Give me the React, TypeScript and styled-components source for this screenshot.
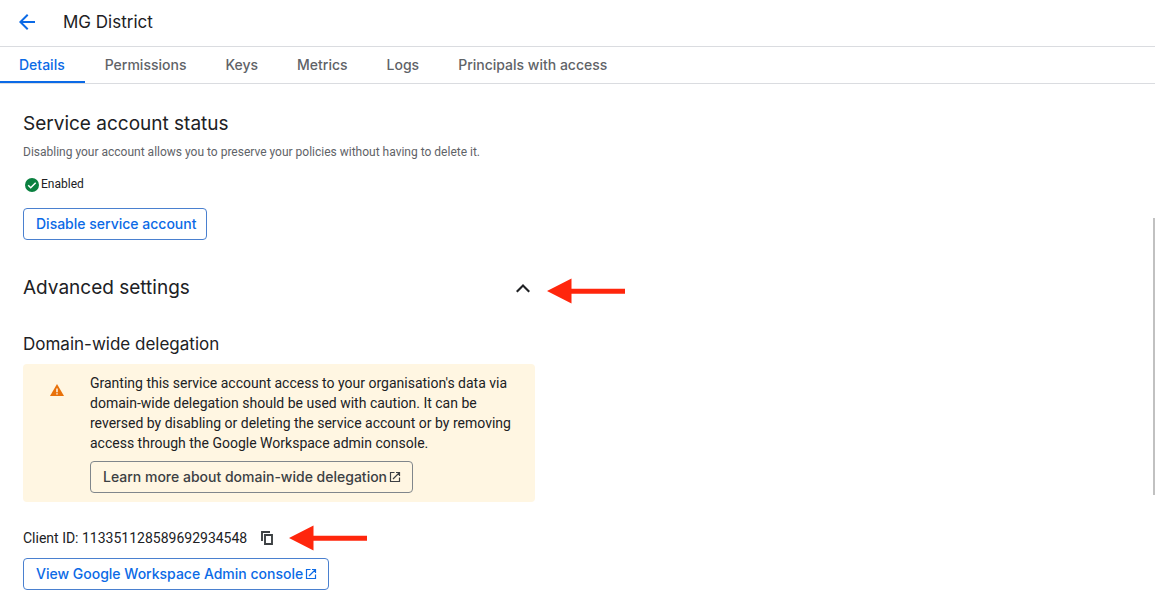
import React from "react";
import styled, { createGlobalStyle } from "styled-components";

const GlobalStyle = createGlobalStyle`
  * { box-sizing: border-box; }
  body {
    margin: 0;
    background: #fff;
    color: #202124;
    font-family: Roboto, "Liberation Sans", sans-serif;
    font-size: 14px;
    line-height: 20px;
  }
  h1, h2, h3, p { margin: 0; font-weight: 400; }
`;

const display = `Inter, Roboto, sans-serif`;

const Page = styled.div`
  position: relative;
  min-height: 100vh;
`;

const Header = styled.header`
  display: flex;
  align-items: center;
  gap: 24px;
  height: 47px;
  padding: 0 15px 2px;
  border-bottom: 1px solid #dadce0;
`;

const IconButton = styled.button<{ $size: number; $color: string }>`
  display: flex;
  align-items: center;
  justify-content: center;
  width: ${(p) => p.$size}px;
  height: ${(p) => p.$size}px;
  padding: 0;
  border: 0;
  background: none;
  color: ${(p) => p.$color};
  cursor: pointer;
`;

const Title = styled.h1`
  font-family: ${display};
  font-size: 17px;
  line-height: 24px;
`;

const Tabs = styled.nav`
  display: flex;
  gap: 1px;
  height: 37px;
  border-bottom: 1px solid #dadce0;
`;

const Tab = styled.a<{ $active?: boolean }>`
  padding: 8px 19px 0;
  border-bottom: 2px solid ${(p) => (p.$active ? "#0b6ae6" : "transparent")};
  color: ${(p) => (p.$active ? "#0b6ae6" : "#5f6368")};
  font-family: ${display};
  font-size: 14px;
  font-weight: 500;
  text-decoration: none;

  &:first-child {
    padding-right: 20px;
  }
`;

const Content = styled.main`
  padding: 26px 23px 16px;
`;

const Heading = styled.h2`
  font-family: ${display};
  font-size: 19px;
  line-height: 28px;
`;

const Subheading = styled.h3`
  font-family: ${display};
  font-size: 17px;
  line-height: 24px;
`;

const Hint = styled.p`
  margin-top: 6px;
  color: #5f6368;
  font-size: 12px;
  line-height: 16px;
`;

const Status = styled.p`
  display: flex;
  align-items: center;
  gap: 2px;
  margin: 16px 0;
  padding-left: 2px;
  font-size: 12px;
  line-height: 16px;
`;

const OutlineButton = styled.button<{ $neutral?: boolean }>`
  display: inline-flex;
  align-items: center;
  gap: 1px;
  height: 32px;
  padding: 0 10px 0 12px;
  border: 1px solid ${(p) => (p.$neutral ? "#80868b" : "#4a80cf")};
  border-radius: 4px;
  background: none;
  color: ${(p) => (p.$neutral ? "#3c4043" : "#0b6ae6")};
  font-family: ${display};
  font-size: 14px;
  font-weight: 500;
  line-height: 20px;
  white-space: nowrap;
  cursor: pointer;
`;

const AdvancedRow = styled.div`
  display: flex;
  align-items: center;
  gap: 12px;
  height: 28px;
  margin: 34px 0 30px;
`;

const AdvancedToggle = styled.div`
  display: flex;
  flex: 0 1 512px;
  align-items: center;
  justify-content: space-between;
`;

const Notice = styled.section`
  display: flex;
  gap: 25px;
  max-width: 512px;
  margin-top: 8px;
  padding: 9px 22px 9px 26px;
  border-radius: 4px;
  background: #fff6e2;
`;

const NoticeIcon = styled.svg`
  flex: none;
  margin-top: 9px;
`;

const NoticeBody = styled.div`
  display: flex;
  flex-direction: column;
  align-items: flex-start;
  gap: 8px;
`;

const ClientRow = styled.div`
  display: flex;
  align-items: center;
  gap: 13px;
  height: 28px;
  margin: 22px 0 6px;
`;

const Arrow = styled.svg`
  flex: none;
`;

const ScrollThumb = styled.div`
  position: absolute;
  top: 218px;
  right: 0;
  width: 2px;
  height: 277px;
  background: #c1c1c1;
`;

const PointerArrow = ({ drop = 0 }: { drop?: number }) => (
  <Arrow width="79" height="32" viewBox={`0 ${-3 - drop} 79 32`} aria-hidden="true">
    <path d="M0 13 24.500 .5v10.300H78v5H24.500v9.700z" fill="#ff260c" />
  </Arrow>
);

const LaunchIcon = () => (
  <svg width="14" height="14" viewBox="0 0 14 14" fill="none" stroke="currentColor" strokeWidth="1.200" aria-hidden="true">
    <path d="M6.500 2.500h-4v9h9v-4M8 2.500h3.500V6M11.500 2.500 5 9" />
  </svg>
);

const tabs = ["Details", "Permissions", "Keys", "Metrics", "Logs", "Principals with access"];

export default function App() {
  return (
    <>
      <GlobalStyle />
      <Page>
        <Header>
          <IconButton $size={24} $color="#0b6ae6" aria-label="Back">
            <svg width="24" height="24" viewBox="0 0 24 24" fill="currentColor" aria-hidden="true">
              <path d="M20 11H7.830l5.590-5.590L12 4l-8 8 8 8 1.410-1.410L7.830 13H20v-2z" />
            </svg>
          </IconButton>
          <Title>MG District</Title>
        </Header>
        <Tabs>
          {tabs.map((name, i) => (
            <Tab key={name} href="#" $active={i === 0}>
              {name}
            </Tab>
          ))}
        </Tabs>
        <Content>
          <Heading>Service account status</Heading>
          <Hint>Disabling your account allows you to preserve your policies without having to delete it.</Hint>
          <Status>
            <svg width="14" height="16" viewBox="0 -2 14 16" aria-hidden="true">
              <circle cx="7" cy="7" r="7" fill="#0a8040" />
              <path d="m3.200 7.200 2.500 2.500 5-5" fill="none" stroke="#fff" strokeWidth="1.500" />
            </svg>
            Enabled
          </Status>
          <OutlineButton>Disable service account</OutlineButton>
          <AdvancedRow>
            <AdvancedToggle>
              <Heading>Advanced settings</Heading>
              <IconButton $size={24} $color="#202124" aria-label="Collapse advanced settings" aria-expanded="true">
                <svg width="24" height="24" viewBox="0 0 24 24" fill="currentColor" aria-hidden="true">
                  <path d="m12 8-7 7 1.500 1.500 5.500-5.600 5.500 5.600L19 15z" />
                </svg>
              </IconButton>
            </AdvancedToggle>
            <PointerArrow drop={3} />
          </AdvancedRow>
          <Subheading>Domain-wide delegation</Subheading>
          <Notice>
            <NoticeIcon width="16" height="16" viewBox="0 0 16 16" aria-hidden="true">
              <path d="M8 2 15 14H1z" fill="#e8710a" />
              <path d="M7.300 6.500h1.400v3.700H7.300zM7.300 11.200h1.400v1.300H7.300z" fill="#fff" />
            </NoticeIcon>
            <NoticeBody>
              <p>
                Granting this service account access to your organisation's data via domain-wide delegation should be
                used with caution. It can be reversed by disabling or deleting the service account or by removing
                access through the Google Workspace admin console.
              </p>
              <OutlineButton $neutral>
                Learn more about domain-wide delegation
                <LaunchIcon />
              </OutlineButton>
            </NoticeBody>
          </Notice>
          <ClientRow>
            <span>Client ID: 113351128589692934548</span>
            <IconButton $size={16} $color="#3c4043" aria-label="Copy client ID">
              <svg width="16" height="16" viewBox="0 0 16 16" fill="none" stroke="currentColor" strokeWidth="1.900" aria-hidden="true">
                <path d="M2 11V2H10M5 5h7v9H5z" />
              </svg>
            </IconButton>
            <PointerArrow />
          </ClientRow>
          <OutlineButton>
            View Google Workspace Admin console
            <LaunchIcon />
          </OutlineButton>
        </Content>
        <ScrollThumb />
      </Page>
    </>
  );
}
